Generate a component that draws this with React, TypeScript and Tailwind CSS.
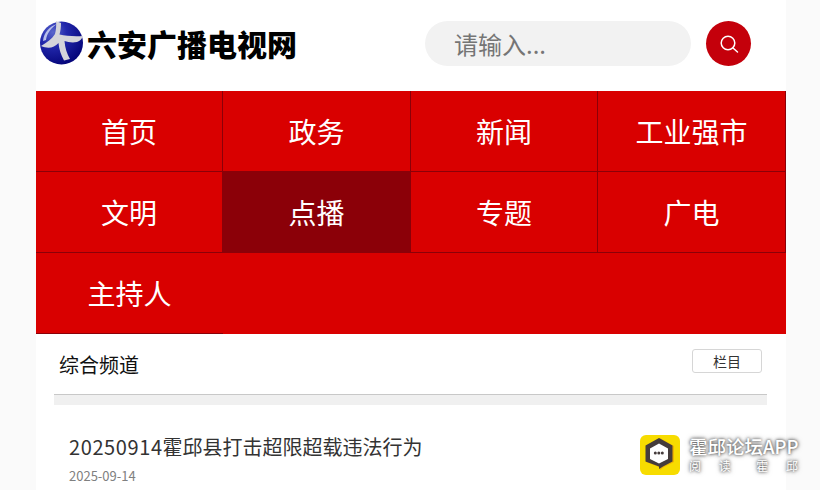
const navItems = ["首页", "政务", "新闻", "工业强市", "文明", "点播", "专题", "广电"];

function Logo() {
  return (
    <svg width="44" height="44" viewBox="0 0 44 44" className="shrink-0">
      <defs>
        <radialGradient id="ball" cx="30%" cy="25%" r="80%">
          <stop offset="0%" stopColor="#5a66cc" />
          <stop offset="40%" stopColor="#2228ac" />
          <stop offset="100%" stopColor="#05057a" />
        </radialGradient>
      </defs>
      <circle cx="21.5" cy="22" r="21.5" fill="url(#ball)" />
      <path d="M3 20 C4 11 10 5 17 3 C11 7 7 12 6 19 Z" fill="#b9c0ea" />
      <path d="M1 25 C7 21 12 18 15 13 C16 9 16.5 5 16 0 L21 2 C21 6 20.5 10 19.5 13.5 C26 15 34 15.5 43 15 C42 18 40 20 37 21 C32 22 28 21 24.5 20 C25 27 27 33 30 38 L24 39.5 C21 34 19 28 18.5 22 C14 27 8 28 1 25 Z" fill="#d4d4da" />
    </svg>
  );
}

function AppBadge() {
  return (
    <svg width="40" height="40" viewBox="0 0 40 40">
      <rect width="40" height="40" rx="6" fill="#f7dc00" />
      <path d="M20 3 L34 11 V27 L24 32 L20 35 V32.5 L6 27 V11 Z" fill="#f0b400" />
      <path d="M19 3 L32.5 10.5 V26.5 L23 31.5 L19 34 V31.5 L5.5 26.5 V10.5 Z" fill="#453c3c" />
      <path d="M19 8.5 L28 13.5 V24 L19 28.5 L10 24 V13.5 Z" fill="#fff" />
      <circle cx="15.3" cy="18" r="1.5" fill="#453c3c" />
      <circle cx="18.8" cy="18" r="1.5" fill="#453c3c" />
      <circle cx="22.3" cy="18" r="1.5" fill="#453c3c" />
    </svg>
  );
}

export default function App() {
  return (
    <div className="h-[490px] overflow-hidden bg-[#fafafa] relative font-['Noto_Sans_CJK_SC','Liberation_Sans',sans-serif]">
      <div className="w-[750px] ml-[36px] bg-white h-full">
        {/* header */}
        <div className="h-[91px] flex items-center">
          <div className="ml-[4px] -mt-[5px] flex items-center">
            <Logo />
            <span className="ml-[3px] text-[30px] leading-none font-black text-black whitespace-nowrap">六安广播电视网</span>
          </div>
          <div className="ml-auto mr-[35px] flex items-center gap-[15px] -mt-[4px]">
            <div className="w-[266px] h-[45px] rounded-full bg-[#f2f2f2] pl-[29px] flex items-center text-[24px] text-[#757575]">请输入...</div>
            <div className="w-[45px] h-[45px] rounded-full bg-[#c4000b] flex items-center justify-center">
              <svg width="20" height="20" viewBox="0 0 20 20" fill="none" stroke="#fff" strokeWidth="1.5" strokeLinecap="round">
                <circle cx="9" cy="9" r="6.8" />
                <path d="M14 14 L18.5 18" />
              </svg>
            </div>
          </div>
        </div>

        {/* nav */}
        <div className="grid grid-cols-[187px_188px_187px_188px] bg-[#d90000] text-white text-[28px]">
          {navItems.map((item) => (
            <div
              key={item}
              className={`h-[81px] flex items-center justify-center border-b border-r border-[#8b0008] ${item === "点播" ? "bg-[#8b0008]" : ""}`}
            >
              {item}
            </div>
          ))}
          <div className="h-[81px] flex items-center justify-center border-b border-[#8b0008]">主持人</div>
        </div>

        {/* channel */}
        <div className="h-[60px] flex items-center justify-between pl-[23px] pr-[24px]">
          <span className="mt-[2px] text-[20px] text-[#111]">综合频道</span>
          <span className="w-[70px] h-[24px] -mt-[6px] rounded-[3px] border border-[#d6d6d6] flex items-center justify-center text-[14px] text-[#333]">栏目</span>
        </div>
        <div className="ml-[18px] mr-[19px] h-[11px] bg-[#f0f0f0] border-t border-[#c8c8c8]" />

        {/* list */}
        <div className="pl-[33px] pt-[27px]">
          <div className="text-[20px] leading-[30px] text-[#333]">
            <span className="tracking-[0.6px]">20250914</span>霍邱县打击超限超载违法行为
          </div>
          <div className="mt-[5px] text-[13px] leading-[18px] text-[#808080]">2025-09-14</div>
        </div>
      </div>

      {/* floating app watermark */}
      <div className="absolute left-[640px] top-[435px] flex">
        <AppBadge />
        <div className="ml-[9px] -mt-[1px] w-[112px] text-white [text-shadow:0_0_3px_#444,0_0_5px_#777]">
          <div className="text-[18.5px] leading-[24px] font-medium whitespace-nowrap">霍邱论坛APP</div>
          <div className="flex justify-between text-[12px] leading-[14px] mt-[1px] pr-[3px]">
            <span>阅</span>
            <span>读</span>
            <span className="ml-[8px]">霍</span>
            <span>邱</span>
          </div>
        </div>
      </div>
    </div>
  );
}
